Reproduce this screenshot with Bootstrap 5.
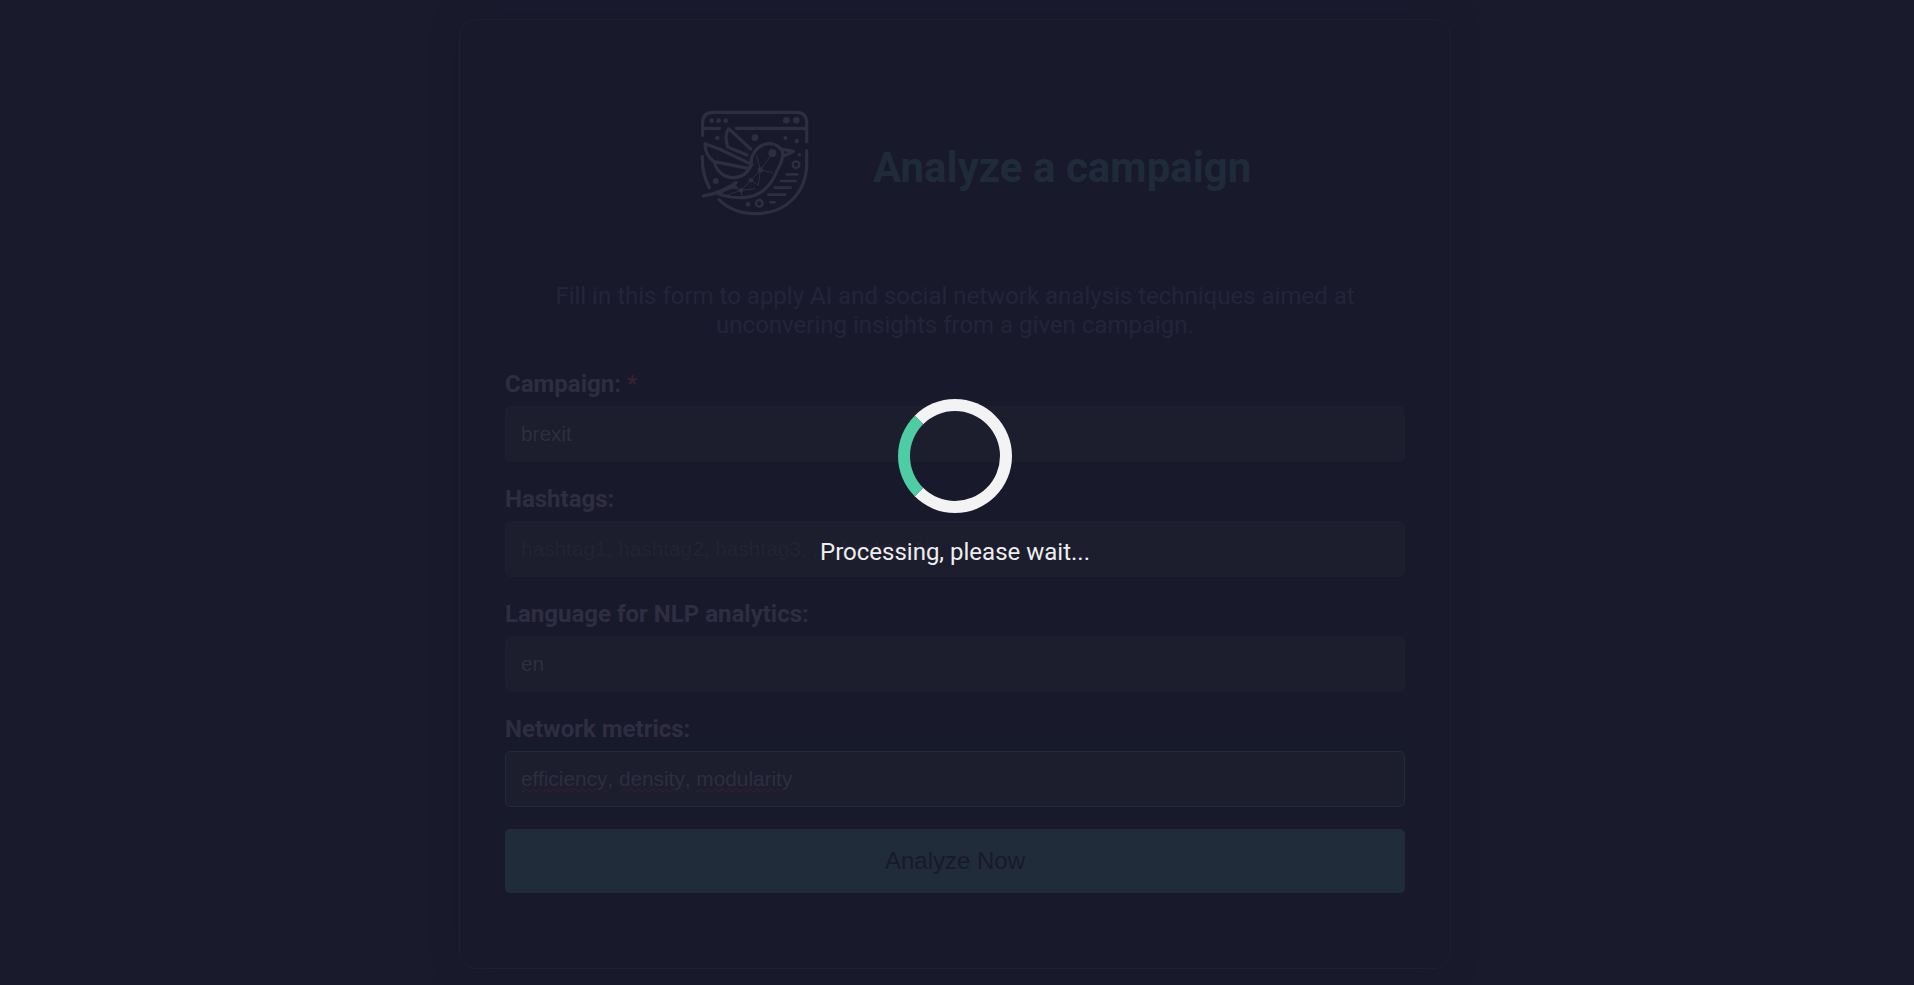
<!DOCTYPE html>
<html lang="en">
<head>
<meta charset="utf-8">
<title>Analyze a campaign</title>
<link href="https://cdn.jsdelivr.net/npm/bootstrap@5.3.0/dist/css/bootstrap.min.css" rel="stylesheet">
<style>
body{background:#1a1a2d;font-family:Roboto,sans-serif;height:985px;padding-right:4px;overflow:hidden;color:#2f2e40}
.panel{width:992px;height:950px;margin-top:19px;padding:92px 45px 0;border:1px solid #1f1f31;border-radius:18px;background:#19192c;box-shadow:0 0 24px #19192c}
.logo{width:130px;height:125px;margin-left:185px;margin-top:-12px;flex:none}
.title{font-size:42px;font-weight:700;line-height:52px;color:#1f2b39;margin:30px 0 0 53px}
.intro{font-size:24px;line-height:29px;color:#242438;margin:57px 0 0}
.lbl{font-size:24px;font-weight:700;line-height:29px;margin-bottom:7px;display:block}
.fields{margin-top:30px}
.field{height:56px;font:20.8px/24px "Liberation Sans",sans-serif;padding:0 15px;background:#1c1d2d!important;border:1px solid #1d1e2f;border-radius:5px;color:#2f2e40!important;margin-bottom:23px;box-shadow:none!important}
.field::placeholder{color:#242334;opacity:1}
.field.active{border-color:#1f2b39;display:flex;align-items:center;white-space:pre;margin-bottom:22px}
.sp{text-decoration:underline wavy #3f1a2e 1px;text-underline-offset:2px}
.star{color:#3c202f}
.go{height:64px;background:#202c3a;color:#19192c;font:24px "Liberation Sans",sans-serif;border:0;border-radius:5px}
.veil{top:399px;padding-right:4px}
.ring{width:114px;height:114px;border:12px solid #f3f3f3;border-left-color:#4ecca3;border-radius:50%}
.wait{font-size:24px;line-height:29px;color:#eee;margin-top:25px}
</style>
</head>
<body>
<main class="panel mx-auto">
  <header class="d-flex align-items-start">
    <svg class="logo" viewBox="0 0 390 375" fill="none" stroke="#2f2e40" stroke-width="9.5" stroke-linecap="round" stroke-linejoin="round">
      <path d="M38 106V68Q38 37 70 37H320Q350 37 350 68V125M38 85H88M139 85H350M37 169Q35 220 58 263M350 152V190C350 276 290 341 197 341C150 341 112 324 87 299"/>
      <path d="M182 147L116 86Q102 104 113 141L171 165"/>
      <path d="M186 194L88 147L45 131Q45 165 72 185L178 206"/>
      <path d="M73 187C80 216 105 233 130 233C156 232 174 217 183 196Q181 163 205 143C235 119 271 135 278 157C282 180 267 198 259 218C240 262 208 290 160 293Q119 294 83 281"/>
      <path d="M39 288Q92 280 138 248L126 261L138 263M272 147L311 154L281 168M86 280Q115 264 134 259"/>
      <path stroke-width="3" d="M248 159L211 210L183 241L153 271L130 262M211 210L199 165M211 210L248 218M211 210L205 256L183 241M153 271L157 289M153 271L195 266M153 271L115 284"/>
      <path stroke-width="8" d="M289 223H322M273 243H317M254 263H302M235 284H286M241 307H254"/>
      <circle cx="318" cy="194" r="10" stroke-width="7"/><circle cx="208" cy="310" r="10" stroke-width="7"/>
      <g fill="#2f2e40" stroke="none"><circle cx="65" cy="62" r="7"/><circle cx="86" cy="62" r="7"/><circle cx="107" cy="62" r="7"/><circle cx="289" cy="61" r="10"/><circle cx="319" cy="61" r="10"/><circle cx="195" cy="113" r="10"/><circle cx="247" cy="159" r="12"/><circle cx="82" cy="114" r="7"/><circle cx="286" cy="114" r="6"/><circle cx="320" cy="123" r="7"/><circle cx="328" cy="164" r="5"/><circle cx="77" cy="243" r="9"/><circle cx="174" cy="313" r="7"/><circle cx="211" cy="210" r="8"/><circle cx="183" cy="241" r="7"/><circle cx="153" cy="271" r="7"/></g>
    </svg>
    <h1 class="title">Analyze a campaign</h1>
  </header>
  <p class="intro text-center">Fill in this form to apply AI and social network analysis techniques aimed at<br>unconvering insights from a given campaign.</p>
  <form class="fields">
    <label class="lbl" for="c">Campaign: <span class="fw-normal star">*</span></label>
    <input id="c" class="form-control field" value="brexit">
    <label class="lbl" for="h">Hashtags:</label>
    <input id="h" class="form-control field" placeholder="hashtag1, hashtag2, hashtag3, ..., hashtagN">
    <label class="lbl" for="l">Language for NLP analytics:</label>
    <input id="l" class="form-control field" value="en">
    <label class="lbl">Network metrics:</label>
    <div class="form-control field active"><span class="sp">efficiency</span>, <span class="sp">density</span>, <span class="sp">modularity</span></div>
    <button type="button" class="btn go w-100">Analyze Now</button>
  </form>
</main>
<div class="veil position-absolute start-0 w-100 d-flex flex-column align-items-center" role="status">
  <div class="ring"></div>
  <div class="wait">Processing, please wait...</div>
</div>
<script src="https://cdn.jsdelivr.net/npm/bootstrap@5.3.0/dist/js/bootstrap.bundle.min.js"></script>
</body>
</html>
